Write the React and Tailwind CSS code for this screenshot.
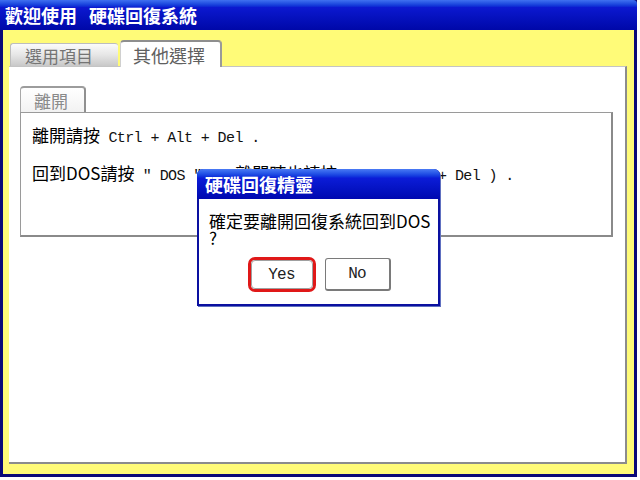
const CJK = "font-['Noto_Sans_CJK_TC',sans-serif]";
const MONO = "font-['Liberation_Mono','Noto_Sans_CJK_TC',monospace]";

function C({ children }) {
  return <span className={`text-[17px] ${CJK}`}>{children}</span>;
}
function M({ children }) {
  return <span className={`text-[15px] tracking-[-0.6px] whitespace-pre text-[#111] ${MONO}`}>{children}</span>;
}

export default function App() {
  return (
    <div className={`relative w-[640px] h-[480px] bg-white ${CJK}`}>
      {/* main window */}
      <div className="w-[637px] h-[477px] flex flex-col bg-[#0a0a78]">
        <div className="h-[30px] flex items-center pl-[5px] rounded-tr-[4px] bg-linear-to-b from-[#4070f0] from-0% via-[#0c18d0] via-25% to-[#0008a8] text-white text-[18px] font-bold leading-none">
          <span>歡迎使用</span>
          <span className="ml-3">硬碟回復系統</span>
        </div>
        <div className="flex-1 mx-[3px] mb-[3px] bg-[#fffb78] flex flex-col pt-[9px] pl-[6px] pr-[7px] pb-[10px]">
          {/* tabs */}
          <div className="h-[27px] flex items-end pl-[1px] relative z-10">
            <div className="h-[23px] w-[108px] flex items-center pl-[14px] rounded-t-[3px] border-t border-l border-[#bdbdbd] bg-linear-to-b from-[#fbfbfb] via-[#e6e6e6] to-[#c8c8c8] text-[17px] text-[#747474] leading-none">
              選用項目
            </div>
            <div className="h-[27px] w-[102px] ml-[2px] -mb-[1px] flex items-center pl-[12px] rounded-t-[4px] border-t-2 border-t-[#8e8e8e] border-l border-l-[#d0d0d0] border-r-2 border-r-[#9a9a9a] bg-white text-[18px] text-[#606060] leading-none">
              其他選擇
            </div>
          </div>
          {/* panel */}
          <div className="flex-1 bg-white border-t border-t-[#c4c4c4] border-r-2 border-r-[#8c8c8c] border-b-2 border-b-[#8c8c8c] pt-[19px] pl-[11px] pr-[12px]">
            <div className="h-[26px] w-[66px] flex items-center pl-[13px] rounded-t-[4px] border-t-2 border-t-[#9c9c9c] border-l border-l-[#a8a8a8] border-r-2 border-r-[#909090] bg-linear-to-b from-white to-[#f2f2f2] text-[17px] text-[#8a8a8a] leading-none">
              離開
            </div>
            <div className="h-[125px] border border-[#9a9a9a] border-r-2 border-r-[#8a8a8a] border-b-2 border-b-[#8a8a8a] pt-[10px] pl-[11px] text-black">
              <div className="h-[24px] leading-[24px]">
                <C>離開請按</C>
                <M> Ctrl + Alt + Del .</M>
              </div>
              <div className="h-[24px] leading-[24px] mt-[14px]">
                <C>回到DOS請按</C>
                <M> " DOS "  ( </M>
                <C>離開時也請按</C>
                <M> Ctrl + Alt + Del ) .</M>
              </div>
            </div>
          </div>
        </div>
      </div>

      {/* dialog */}
      <div className="absolute left-[197px] top-[169px] w-[243px] h-[137px] flex flex-col rounded-t-[6px] border-2 border-[#0a10a0] bg-white shadow-[1px_1px_0_#6070c0]">
        <div className="h-[30px] -mx-[2px] -mt-[2px] flex items-center pl-[8px] rounded-t-[6px] bg-linear-to-b from-[#4a7af4] from-0% via-[#0c1cd8] via-30% to-[#0008b0] text-white text-[18px] font-bold leading-none">
          硬碟回復精靈
        </div>
        <div className="pl-[10px] pt-[12px] text-[17px] text-black">
          <div className="leading-[20px] whitespace-nowrap">確定要離開回復系統回到DOS</div>
          <div className="leading-[14px]">?</div>
        </div>
        <div className="flex justify-center gap-[9px] mt-[12px] pl-[1px]">
          <div className="w-[68px] h-[35px] rounded-[7px] border-[3px] border-[#e01818] flex items-center justify-center">
            <div className={`w-full h-full rounded-[4px] border border-[#a0a0a0] flex items-center justify-center text-[16px] tracking-[-0.8px] text-[#222] ${MONO}`}>
              Yes
            </div>
          </div>
          <div className={`w-[66px] h-[33px] mt-[1px] rounded-[3px] border border-[#7a7a7a] border-r-2 border-b-2 flex items-center justify-center text-[16px] tracking-[-0.8px] text-[#222] ${MONO}`}>
            No
          </div>
        </div>
      </div>
    </div>
  );
}
